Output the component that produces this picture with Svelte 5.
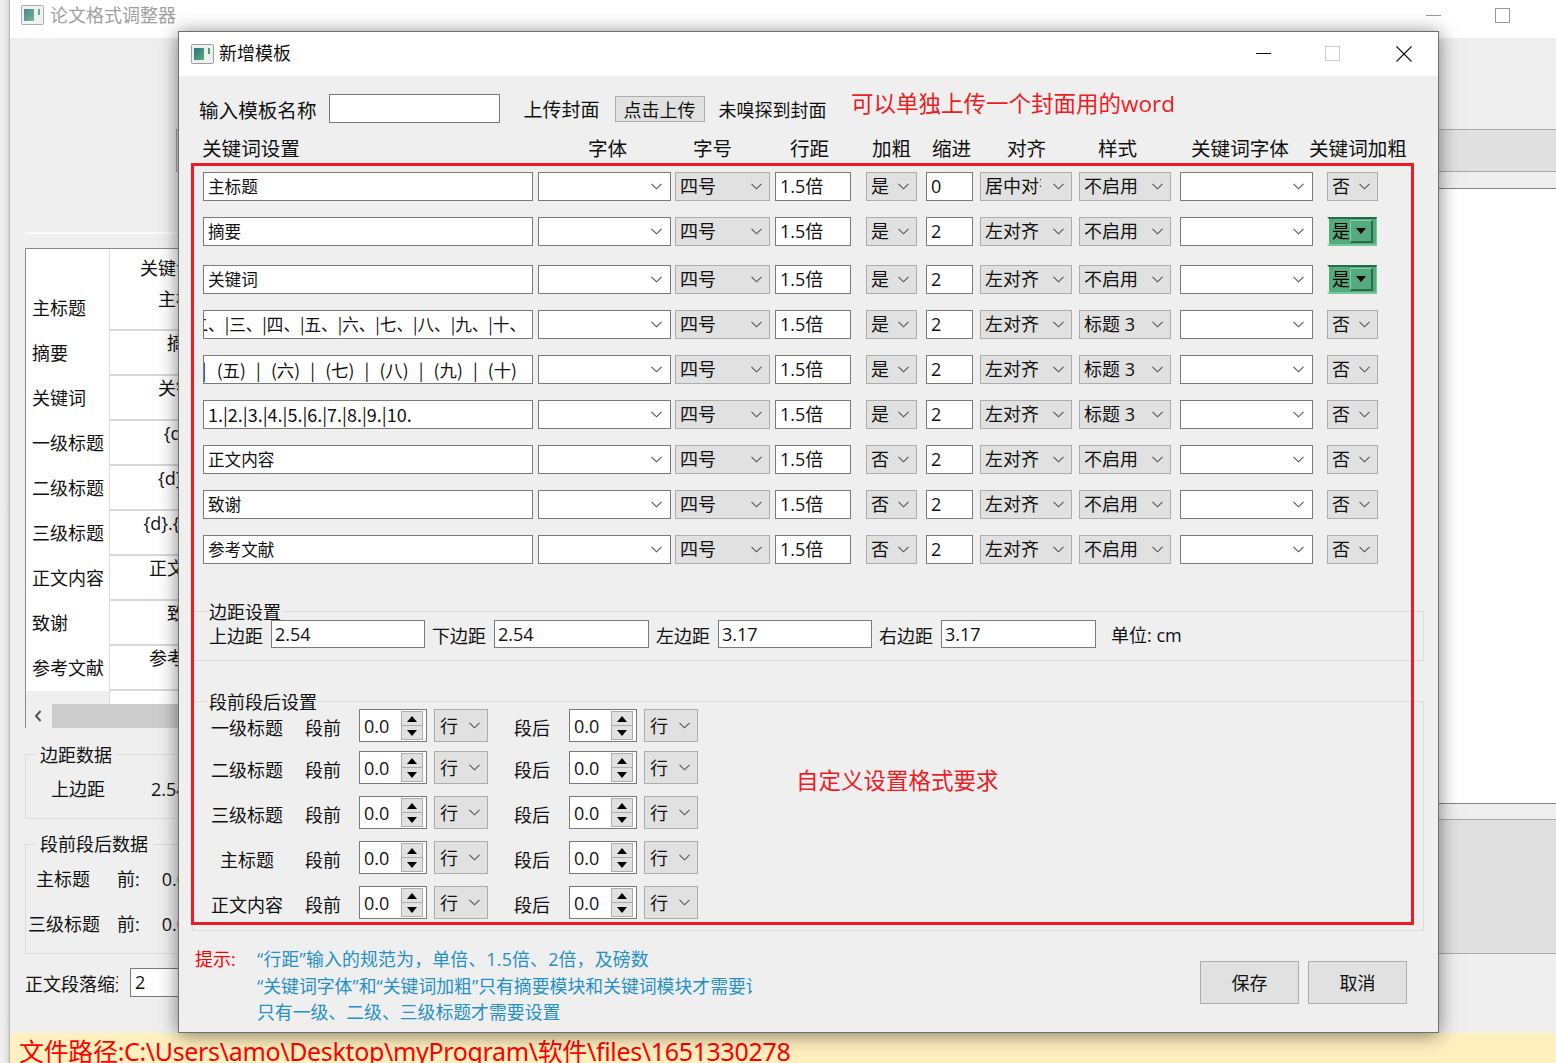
<script>
  const leftLabels = ['主标题','摘要','关键词','一级标题','二级标题','三级标题','正文内容','致谢','参考文献'];
  const leftVals = ['摘要','关键词','{d}、','{d}.{d}','{d}.{d}.{d}','正文内容','致谢','参考文献'];
  const rows = [
    { name:'主标题', bold:'是', indent:'0', align:'居中对齐', style:'不启用', kw:'否' },
    { name:'摘要', bold:'是', indent:'2', align:'左对齐', style:'不启用', kw:'是', tall:false },
    { name:'关键词', bold:'是', indent:'2', align:'左对齐', style:'不启用', kw:'是' },
    { name:'一、|二、|三、|四、|五、|六、|七、|八、|九、|十、', end:true, cls:'cn', bold:'是', indent:'2', align:'左对齐', style:'标题 3', kw:'否' },
    { name:'(一) | (二) | (三) | (四) | (五) | (六) | (七) | (八) | (九) | (十)', end:true, cls:'paren', bold:'是', indent:'2', align:'左对齐', style:'标题 3', kw:'否' },
    { name:'1.|2.|3.|4.|5.|6.|7.|8.|9.|10.', cls:'nums', bold:'是', indent:'2', align:'左对齐', style:'标题 3', kw:'否' },
    { name:'正文内容', bold:'否', indent:'2', align:'左对齐', style:'不启用', kw:'否' },
    { name:'致谢', bold:'否', indent:'2', align:'左对齐', style:'不启用', kw:'否' },
    { name:'参考文献', bold:'否', indent:'2', align:'左对齐', style:'不启用', kw:'否' },
  ];
  const heads = ['关键词设置','字体','字号','行距','加粗','缩进','对齐','样式','关键词字体','关键词加粗'];
  const margins = [['上边距','2.54'],['下边距','2.54'],['左边距','3.17'],['右边距','3.17']];
  const spacing = ['一级标题','二级标题','三级标题','主标题','正文内容'];
</script>

{#snippet chev()}
  <svg class="chev" viewBox="0 0 11 7" width="11" height="7"><path d="M0.5 0.8 L5.5 5.8 L10.5 0.8" fill="none" stroke="#555" stroke-width="1.1"/></svg>
{/snippet}

{#snippet appIcon()}
  <svg class="appicon" viewBox="0 0 23 20" width="23" height="20">
    <defs><linearGradient id="gr" x1="0" y1="0" x2="1" y2="1"><stop offset="0" stop-color="#2d6f8e"/><stop offset="1" stop-color="#5cae6e"/></linearGradient></defs>
    <rect x="0.5" y="0.5" width="22" height="19" rx="1" fill="#eef0f0" stroke="#9a9ea2"/>
    <rect x="3" y="4" width="10" height="12" fill="url(#gr)"/>
    <rect x="17" y="4" width="2" height="6" fill="#4da06e"/>
  </svg>
{/snippet}

{#snippet spin()}
  <div class="spin">
    <span class="spinval">0.0</span>
    <div class="spinbtns">
      <span class="sb"><i class="up"></i></span>
      <span class="sb"><i class="down"></i></span>
    </div>
  </div>
  <div class="combo unit"><span class="cv">行</span>{@render chev()}</div>
{/snippet}

<div class="page">
  <div class="main">
    <div class="maintitle">
      {@render appIcon()}
      <span class="maintext">论文格式调整器</span>
      <span class="mainmin"></span>
      <span class="mainmax"></span>
    </div>
    <div class="mainbody">
      <div class="leftcol">
        <div class="sep"></div>
        <div class="table">
          <div class="tablebody">
            <div class="tcol1">
              {#each leftLabels as l}<div class="tl">{l}</div>{/each}
            </div>
            <div class="tcol2">
              <div class="tc first"><div class="tchead">关键词内容</div><div>主标题</div></div>
              {#each leftVals as v}<div class="tc">{v}</div>{/each}
            </div>
          </div>
          <div class="hscroll">
            <svg viewBox="0 0 8 12" width="8" height="12"><path d="M6.5 1 L2 6 L6.5 11" fill="none" stroke="#555" stroke-width="2"/></svg>
            <div class="thumb"></div>
          </div>
        </div>
        <div class="lgroup g1">
          <div class="llegend">边距数据</div>
          <div class="lrow r1"><span>上边距</span><span class="lv">2.54</span></div>
        </div>
        <div class="lgroup g2">
          <div class="llegend">段前段后数据</div>
          <div class="lrow r2"><span class="ln a">主标题</span><span>前:</span><span class="lz">0.0</span></div>
          <div class="lrow r3"><span class="ln b">三级标题</span><span>前:</span><span class="lz">0.0</span></div>
        </div>
        <div class="indent">
          <span class="indentlabel">正文段落缩进:</span>
          <div class="indentinput">2</div>
        </div>
      </div>
      <div class="rightcol">
        <div class="tabband"></div>
        <div class="whitearea"></div>
        <div class="lowband"></div>
      </div>
    </div>
    <div class="pathbar">文件路径:C:\Users\amo\Desktop\myProgram\软件\files\1651330278</div>
  </div>

  <div class="dialog">
    <div class="dtitle">
      {@render appIcon()}
      <span class="dtext">新增模板</span>
      <span class="dmin"></span>
      <span class="dmax"></span>
      <svg class="dclose" viewBox="0 0 16 16" width="16" height="16"><path d="M0.5 0.5 L15.5 15.5 M15.5 0.5 L0.5 15.5" stroke="#111" stroke-width="1.1" fill="none"/></svg>
    </div>
    <div class="dbody">
      <div class="toprow">
        <span class="big">输入模板名称</span>
        <div class="tplname"></div>
        <span class="big upl">上传封面</span>
        <div class="uploadbtn">点击上传</div>
        <span class="nocover">未嗅探到封面</span>
      </div>
      <div class="hd">
        {#each heads as h}<span>{h}</span>{/each}
      </div>
      <div class="rows">
        {#each rows as r, i}
          <div class="row" class:gapbig={i === 1}>
            <div class="field name {r.cls ?? ''}" class:end={r.end}><span>{r.name}</span></div>
            <div class="wcombo font">{@render chev()}</div>
            <div class="combo size"><span class="cv">四号</span>{@render chev()}</div>
            <div class="field line"><span>1.5倍</span></div>
            <div class="combo bold"><span class="cv">{r.bold}</span>{@render chev()}</div>
            <div class="field ind"><span>{r.indent}</span></div>
            <div class="combo align"><span class="cv">{r.align}</span>{@render chev()}</div>
            <div class="combo style"><span class="cv">{r.style}</span>{@render chev()}</div>
            <div class="wcombo kwfont">{@render chev()}</div>
            {#if r.kw === '是'}
              <div class="greencombo"><span class="cv">是</span><span class="gbtn"><i class="down"></i></span></div>
            {:else}
              <div class="combo kwbold"><span class="cv">否</span>{@render chev()}</div>
            {/if}
          </div>
        {/each}
      </div>

      <div class="group gm">
        <div class="legend">边距设置</div>
        <div class="marginrow">
          {#each margins as m}
            <span class="ml">{m[0]}</span>
            <div class="field mv"><span>{m[1]}</span></div>
          {/each}
          <span class="unitcm">单位: cm</span>
        </div>
      </div>

      <div class="group gs">
        <div class="legend">段前段后设置</div>
        {#each spacing as s}
          <div class="sprow">
            <span class="spname">{s}</span>
            <span class="sptag">段前</span>
            {@render spin()}
            <span class="sptag after">段后</span>
            {@render spin()}
          </div>
        {/each}
      </div>

      <div class="footer">
        <span class="tiplabel">提示:</span>
        <div class="tips">
          <div class="tipfirst">“行距”输入的规范为，单倍、1.5倍、2倍，及磅数</div>
          <div>“关键词字体”和“关键词加粗”只有摘要模块和关键词模块才需要设置</div>
          <div>只有一级、二级、三级标题才需要设置</div>
        </div>
        <div class="btns">
          <div class="btn">保存</div>
          <div class="btn">取消</div>
        </div>
      </div>
    </div>
    <div class="redbox"></div>
    <div class="note n1">可以单独上传一个封面用的word</div>
    <div class="note n2">自定义设置格式要求</div>
  </div>
</div>

<style>
  :global(body) { margin: 0; background: #f0f0f0; }
  .page {
    position: relative; width: 1556px; height: 1063px; overflow: hidden;
    font-family: "Open Sans", "Noto Sans CJK SC", sans-serif; font-size: 18px; color: #111;
    background: linear-gradient(90deg, #f2f2f2 0, #e8e8e8 6px, #cfcfcf 10px);
  }
  .main {
    position: absolute; left: 9px; top: 0; width: 1547px; height: 1063px;
    border-left: 1px solid #b5b5b5; box-sizing: border-box;
    display: flex; flex-direction: column; background: #efefef;
  }
  .maintitle { height: 38px; background: #fff; display: flex; align-items: center; flex: none; padding-left: 11px; box-sizing: border-box; }
  .maintitle .appicon { opacity: .85; margin-top: -8px; }
  .maintext { color: #a0a0a0; margin-left: 6px; margin-top: -8px; line-height: 24px; }
  .mainmin { position: absolute; left: 1416px; top: 15px; width: 15px; height: 1px; background: #999; }
  .mainmax { position: absolute; left: 1485px; top: 8px; width: 13px; height: 13px; border: 1px solid #999; }
  .mainbody { flex: 1; display: flex; min-height: 0; }
  .leftcol { width: 169px; flex: none; padding-left: 15px; box-sizing: border-box; }
  .sep { height: 2px; background: #fafafa; margin-top: 194px; width: 200px; }
  .table { margin-top: 14px; width: 200px; height: 480px; border: 1px solid #8a8a8a; box-sizing: border-box; background: #fff; display: flex; flex-direction: column; }
  .tablebody { height: 455px; display: flex; flex: none; }
  .tcol1 { width: 84px; flex: none; border-right: 1px solid #ddd; padding-top: 37px; box-sizing: border-box; background: linear-gradient(#fff 442px, #efefef 442px); }
  .tl { height: 45px; line-height: 45px; padding-left: 6px; white-space: nowrap; }
  .tcol2 { flex: 1; width: 150px; min-width: 150px; }
  .tc { height: 45px; box-sizing: border-box; border-bottom: 2px solid #d8d8d8; text-align: center; line-height: 24px; white-space: nowrap; width: 150px; }
  .tc.first { height: 82px; padding-top: 7px; }
  .tchead { height: 31px; }
  .hscroll { height: 24px; background: #f0f0f0; display: flex; align-items: center; padding-left: 8px; }
  .thumb { margin-left: 10px; height: 24px; flex: 1; background: #cdcdcd; }
  .lgroup { border: 1px solid #dcdcdc; width: 200px; box-sizing: border-box; }
  .g1 { margin-top: 26px; height: 65px; }
  .g2 { margin-top: 25px; height: 110px; }
  .llegend { margin: -10px 0 0 9px; padding: 0 5px; line-height: 20px; background: #efefef; width: max-content; }
  .g2 .llegend { margin-top: -11px; }
  .lrow { display: flex; line-height: 24px; white-space: nowrap; }
  .r1 { margin: 12px 0 0 25px; }
  .lv { margin-left: 46px; }
  .r2 { margin-top: 13px; }
  .r3 { margin-top: 21px; }
  .ln { text-align: right; width: 75px; margin-right: 16px; }
  .ln.a { width: 64px; margin-right: 27px; }
  .ln.b { width: 74px; margin-right: 17px; }
  .lz { margin-left: 22px; }
  .indent { margin-top: 14px; display: flex; align-items: center; height: 29px; }
  .indentlabel { width: 93px; overflow: hidden; white-space: nowrap; flex: none; }
  .indentinput { margin-left: 12px; width: 100px; height: 29px; background: #fff; border: 1px solid #7a7a7a; box-sizing: border-box; padding-left: 4px; line-height: 27px; flex: none; }
  .rightcol { flex: 1; display: flex; flex-direction: column; }
  .tabband { margin: 91px 0 0 -3px; height: 43px; box-sizing: border-box; background: #e0e0e0; border: 1px solid #aaa; border-right: 0; position: relative; }
  .whitearea { margin-top: 16px; height: 616px; box-sizing: border-box; background: #fff; border-top: 1px solid #888; border-bottom: 1px solid #888; }
  .lowband { margin-top: 15px; height: 135px; box-sizing: border-box; background: #e0e0e0; border-top: 1px solid #aaa; border-bottom: 1px solid #aaa; }
  .pathbar { height: 30px; flex: none; background: #fff0bf; color: #f00; font-size: 25px; line-height: 36px; padding-left: 9px; white-space: nowrap; letter-spacing: -0.34px; font-family: "Noto Sans", "Noto Sans CJK SC", sans-serif; overflow: hidden; }

  .dialog {
    position: absolute; left: 178px; top: 31px; width: 1261px; height: 1002px; box-sizing: border-box;
    border: 1px solid #707070; background: #efefef; box-shadow: 0 2px 18px rgba(0,0,0,.5);
  }
  .dtitle { height: 44px; background: #fff; display: flex; align-items: center; padding-left: 12px; position: relative; }
  .dtext { margin-left: 5px; margin-top: -2px; line-height: 24px; }
  .dmin { position: absolute; left: 1077px; top: 21px; width: 15px; height: 1px; background: #111; }
  .dmax { position: absolute; left: 1146px; top: 14px; width: 13px; height: 13px; border: 1px solid #ccc; }
  .dclose { position: absolute; left: 1217px; top: 14px; }
  .dbody { padding: 18px 0 0 13px; box-sizing: border-box; }
  .toprow { display: flex; align-items: center; height: 29px; padding-left: 7px; }
  .big { font-size: 19.6px; line-height: 29px; padding-top: 3px; white-space: nowrap; }
  .tplname { margin-left: 12px; width: 171px; height: 29px; background: #fff; border: 1px solid #7a7a7a; box-sizing: border-box; }
  .upl { margin-left: 24px; font-size: 19px; padding-top: 3px; }
  .uploadbtn { margin-left: 15px; width: 90px; height: 26px; background: #e1e1e1; border: 1px solid #adadad; box-sizing: border-box; text-align: center; line-height: 26px; }
  .nocover { margin-left: 14px; white-space: nowrap; }
  .hd { display: flex; height: 24px; margin-top: 14px; padding-left: 10px; font-size: 19.6px; line-height: 24px; white-space: nowrap; }
  .hd span { flex: none; }
  .hd span:nth-child(1) { width: 386px; }
  .hd span:nth-child(2) { width: 105px; }
  .hd span:nth-child(3) { width: 97px; }
  .hd span:nth-child(4) { width: 82px; }
  .hd span:nth-child(5) { width: 60px; }
  .hd span:nth-child(6) { width: 75px; }
  .hd span:nth-child(7) { width: 91px; }
  .hd span:nth-child(8) { width: 93px; }
  .hd span:nth-child(9) { width: 118px; }

  .rows { margin-top: 11px; padding-left: 11px; display: flex; flex-direction: column; gap: 16px; }
  .row { display: flex; height: 29px; }
  .row.gapbig { margin-bottom: 3px; }
  .field { background: #fff; border: 1px solid #7a7a7a; box-sizing: border-box; height: 29px; line-height: 27px; padding: 0 4px; overflow: hidden; white-space: nowrap; display: flex; flex: none; }
  .field.end { justify-content: flex-end; padding-right: 6px; }
  .field span { flex: none; }
  .name { width: 330px; font-size: 16.6px; }
  .cn, .nums, .paren { font-family: "Noto Sans CJK SC", sans-serif; }
  .nums { font-size: 18px; }
  .cn { font-size: 16.6px; }
  .field.paren { font-size: 17.4px; word-spacing: 6.3px; padding-right: 15px; }
  .line { width: 76px; margin-left: 5px; }
  .ind { width: 47px; margin-left: 9px; }
  .wcombo { background: #fff; border: 1px solid #7a7a7a; box-sizing: border-box; height: 29px; display: flex; align-items: center; justify-content: flex-end; padding-right: 8px; flex: none; }
  .font { width: 133px; margin-left: 5px; }
  .kwfont { width: 133px; margin-left: 9px; }
  .combo { background: #e1e1e1; border: 1px solid #adadad; box-sizing: border-box; height: 29px; display: flex; align-items: center; padding: 0 7px 0 4px; flex: none; }
  .cv { flex: 1; min-width: 0; overflow: hidden; white-space: nowrap; line-height: 27px; }
  .chev { flex: none; margin-left: 6px; }
  .size { width: 95px; margin-left: 4px; }
  .bold { width: 51px; margin-left: 15px; }
  .align { width: 92px; margin-left: 7px; }
  .align .chev { margin-left: 12px; }
  .style { width: 92px; margin-left: 7px; }
  .kwbold { width: 51px; margin-left: 14px; }
  .greencombo {
    width: 50px; height: 29px; margin-left: 14px; box-sizing: border-box; flex: none; display: flex; align-items: center;
    background: #55ab7e; border-top: 2px solid #2a6a4b; border-left: 2px solid #e8f2ec; border-bottom: 2px solid #6fcb97; border-right: 1px solid #6fcb97; padding-left: 3px; padding-right: 3px;
  }
  .greencombo .cv { flex: 1; color: #000; }
  .gbtn { width: 23px; height: 23px; box-sizing: border-box; background: #55ab7e; border-top: 1px solid #7fd3a5; border-left: 1px solid #7fd3a5; border-right: 2px solid #2a6a4b; border-bottom: 2px solid #2a6a4b; display: flex; align-items: center; justify-content: center; flex: none; margin-top: -1px; }
  i.up, i.down { display: block; width: 0; height: 0; border-left: 5px solid transparent; border-right: 5px solid transparent; }
  i.up { border-bottom: 6px solid #000; }
  i.down { border-top: 6px solid #000; }

  .group { width: 1232px; border: 1px solid #dcdcdc; box-sizing: border-box; margin-left: 0; }
  .gm { margin-top: 47px; height: 50px; }
  .legend { margin: -9px 0 0 15px; height: 17px; line-height: 18px; width: max-content; padding: 0 1px; background: #efefef; }
  .marginrow { display: flex; align-items: center; height: 28px; padding-left: 16px; white-space: nowrap; }
  .ml { width: 54px; flex: none; padding-top: 2px; }
  .mv { width: 154px; height: 28px; line-height: 26px; margin: 0 7px 0 8px; padding: 0 3px; }
  .mv:nth-of-type(even) { width: 155px; }
  .unitcm { margin-left: 8px; }
  .gs { margin-top: 40px; height: 230px; }
  .gs .legend { margin-top: -9px; height: 16px; }
  .sprow { display: flex; align-items: center; height: 33px; margin-bottom: 12px; position: relative; }
  .sprow:nth-of-type(2) { margin-bottom: 9px; }
  .spname { width: 72px; margin-left: 18px; text-align: center; flex: none; padding-top: 3px; white-space: nowrap; }
  .sptag { width: 36px; margin-left: 22px; flex: none; padding-top: 3px; white-space: nowrap; }
  .sptag.after { margin-left: 26px; }
  .spin { width: 68px; height: 33px; margin-left: 18px; background: #fff; border: 1px solid #7a7a7a; box-sizing: border-box; display: flex; flex: none; align-items: center; }
  .sptag.after + .spin { margin-left: 19px; }
  .spinval { flex: 1; padding-left: 4px; line-height: 30px; }
  .spinbtns { width: 22px; height: 29px; margin-right: 3px; display: flex; flex-direction: column; flex: none; }
  .sb { flex: 1; background: #e1e1e1; border: 1px solid #adadad; box-sizing: border-box; display: flex; align-items: center; justify-content: center; }
  .sb + .sb { border-top: 0; }
  .unit { width: 54px; height: 33px; margin-left: 7px; padding-left: 5px; }
  .unit .cv { padding-top: 2px; }

  .footer { display: flex; height: 100px; position: relative; margin-left: 3px; }
  .tiplabel { color: #f00; margin-top: 15px; line-height: 26px; width: 62px; flex: none; white-space: nowrap; overflow: hidden; }
  .tips { color: #2590c5; margin-top: 15px; width: 495px; overflow: hidden; white-space: nowrap; line-height: 26.5px; flex: none; font-size: 17.85px; }
  .tipfirst { letter-spacing: 0.2px; }
  .btns { display: flex; gap: 9px; margin: 30px 0 0 448px; flex: none; }
  .btn { width: 99px; height: 43px; background: #e1e1e1; border: 1px solid #adadad; box-sizing: border-box; text-align: center; line-height: 43px; }

  .redbox { position: absolute; left: 12px; top: 131px; width: 1223px; height: 762px; box-sizing: border-box; border: 3px solid #ed1c24; pointer-events: none; }
  .note { position: absolute; color: #ed1c24; font-size: 22.5px; line-height: 32px; white-space: nowrap; }
  .n1 { left: 672px; top: 56px; }
  .n2 { left: 617px; top: 733px; }
</style>
